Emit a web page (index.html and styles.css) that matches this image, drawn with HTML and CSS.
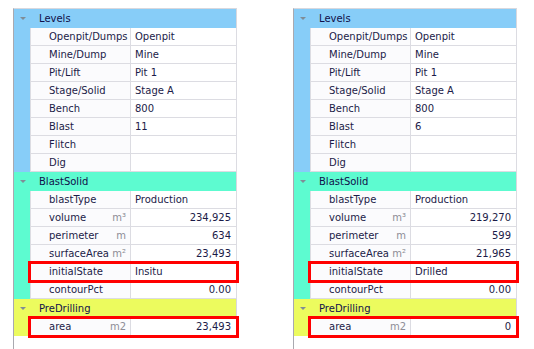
FILE: index.html
```html
<!DOCTYPE html>
<html>
<head>
<meta charset="utf-8">
<link rel="stylesheet" href="styles.css">
</head>
<body>
<div class="page">
  <div class="panel">
    <div class="group levels">
      <div class="ghead"><span class="arrow"></span><span class="gtitle">Levels</span></div>
      <div class="row"><div class="cells"><div class="lab">Openpit/Dumps</div><div class="val">Openpit</div></div></div>
      <div class="row"><div class="cells"><div class="lab">Mine/Dump</div><div class="val">Mine</div></div></div>
      <div class="row"><div class="cells"><div class="lab">Pit/Lift</div><div class="val">Pit 1</div></div></div>
      <div class="row"><div class="cells"><div class="lab">Stage/Solid</div><div class="val">Stage A</div></div></div>
      <div class="row"><div class="cells"><div class="lab">Bench</div><div class="val">800</div></div></div>
      <div class="row"><div class="cells"><div class="lab">Blast</div><div class="val">11</div></div></div>
      <div class="row"><div class="cells"><div class="lab">Flitch</div><div class="val"></div></div></div>
      <div class="row"><div class="cells"><div class="lab">Dig</div><div class="val"></div></div></div>
    </div>
    <div class="group solid">
      <div class="ghead"><span class="arrow"></span><span class="gtitle">BlastSolid</span></div>
      <div class="row"><div class="cells"><div class="lab">blastType</div><div class="val">Production</div></div></div>
      <div class="row"><div class="cells"><div class="lab">volume<span class="unit">m³</span></div><div class="val num">234,925</div></div></div>
      <div class="row"><div class="cells"><div class="lab">perimeter<span class="unit">m</span></div><div class="val num">634</div></div></div>
      <div class="row"><div class="cells"><div class="lab">surfaceArea<span class="unit">m²</span></div><div class="val num">23,493</div></div></div>
      <div class="row"><div class="cells mark"><div class="lab">initialState</div><div class="val">Insitu</div></div></div>
      <div class="row"><div class="cells"><div class="lab">contourPct</div><div class="val num">0.00</div></div></div>
    </div>
    <div class="group pre">
      <div class="ghead"><span class="arrow"></span><span class="gtitle">PreDrilling</span></div>
      <div class="row"><div class="cells mark"><div class="lab">area<span class="unit">m2</span></div><div class="val num">23,493</div></div></div>
    </div>
  </div>

  <div class="panel">
    <div class="group levels">
      <div class="ghead"><span class="arrow"></span><span class="gtitle">Levels</span></div>
      <div class="row"><div class="cells"><div class="lab">Openpit/Dumps</div><div class="val">Openpit</div></div></div>
      <div class="row"><div class="cells"><div class="lab">Mine/Dump</div><div class="val">Mine</div></div></div>
      <div class="row"><div class="cells"><div class="lab">Pit/Lift</div><div class="val">Pit 1</div></div></div>
      <div class="row"><div class="cells"><div class="lab">Stage/Solid</div><div class="val">Stage A</div></div></div>
      <div class="row"><div class="cells"><div class="lab">Bench</div><div class="val">800</div></div></div>
      <div class="row"><div class="cells"><div class="lab">Blast</div><div class="val">6</div></div></div>
      <div class="row"><div class="cells"><div class="lab">Flitch</div><div class="val"></div></div></div>
      <div class="row"><div class="cells"><div class="lab">Dig</div><div class="val"></div></div></div>
    </div>
    <div class="group solid">
      <div class="ghead"><span class="arrow"></span><span class="gtitle">BlastSolid</span></div>
      <div class="row"><div class="cells"><div class="lab">blastType</div><div class="val">Production</div></div></div>
      <div class="row"><div class="cells"><div class="lab">volume<span class="unit">m³</span></div><div class="val num">219,270</div></div></div>
      <div class="row"><div class="cells"><div class="lab">perimeter<span class="unit">m</span></div><div class="val num">599</div></div></div>
      <div class="row"><div class="cells"><div class="lab">surfaceArea<span class="unit">m²</span></div><div class="val num">21,965</div></div></div>
      <div class="row"><div class="cells mark"><div class="lab">initialState</div><div class="val">Drilled</div></div></div>
      <div class="row"><div class="cells"><div class="lab">contourPct</div><div class="val num">0.00</div></div></div>
    </div>
    <div class="group pre">
      <div class="ghead"><span class="arrow"></span><span class="gtitle">PreDrilling</span></div>
      <div class="row"><div class="cells mark"><div class="lab">area<span class="unit">m2</span></div><div class="val num">0</div></div></div>
    </div>
  </div>
</div>
</body>
</html>
```

FILE: styles.css
```css
* { box-sizing: border-box; }
html, body { margin: 0; padding: 0; background: #ffffff; }
body {
  font-family: "DejaVu Sans", Verdana, sans-serif;
  font-size: 10px;
  color: #1b1b48;
  width: 534px;
  height: 349px;
  overflow: hidden;
}
.page {
  display: flex;
  gap: 56px;
  padding: 8px 0 0 13px;
  height: 349px;
}
.panel {
  width: 224px;
  height: 341px;
  border-left: 1px solid #a9a9b0;
  border-top: 1px solid #d8d8de;
  display: flex;
  flex-direction: column;
}
.group { display: flex; flex-direction: column; }
.levels { --c: #87cdf8; }
.solid { --c: #5dfbd0; }
.pre { --c: #ecfb5e; }
.ghead {
  height: 19px;
  background: var(--c);
  display: flex;
  align-items: center;
  border-right: 1px solid #d8d8de;
}
.arrow {
  width: 0;
  height: 0;
  margin-left: 6px;
  border-left: 3px solid transparent;
  border-right: 3px solid transparent;
  border-top: 3px solid #7f8c96;
}
.gtitle {
  margin-left: 13px;
  color: #10104a;
}
.row {
  display: flex;
  height: 18px;
  background: var(--c);
  padding-left: 16px;
}
.cells {
  display: flex;
  height: 18px;
}
.cells.mark {
  outline: 3px solid #ff0000;
  outline-offset: -1px;
  position: relative;
  z-index: 1;
}
.lab, .val {
  height: 18px;
  line-height: 17px;
  background: #fff;
  border-bottom: 1px solid #dcdce2;
  border-right: 1px solid #dcdce2;
  white-space: nowrap;
}
.lab {
  width: 101px;
  border-left: 1px solid #dcdce2;
  padding-left: 18px;
  padding-right: 4px;
  display: flex;
  justify-content: space-between;
  background: #fbfbfd;
}
.unit { color: #8d8d96; }
.val {
  width: 106px;
  padding: 0 5px 0 4px;
}
.val.num { text-align: right; }
```
